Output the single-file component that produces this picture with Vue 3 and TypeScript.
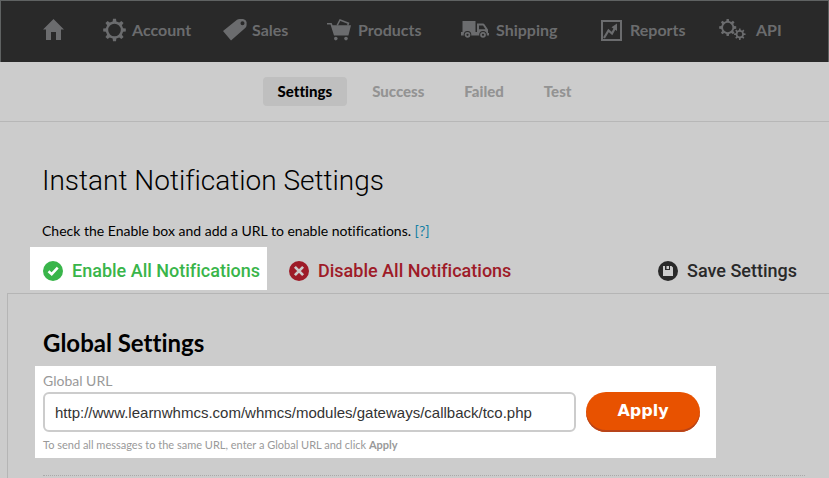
<script setup lang="ts">
import { ref } from 'vue'

type IconName = 'home' | 'gear' | 'tag' | 'cart' | 'truck' | 'chart' | 'gears'

interface NavItem {
  label: string
  icon: IconName
  width: number
}

const navItems: NavItem[] = [
  { label: '', icon: 'home', width: 22 },
  { label: 'Account', icon: 'gear', width: 24 },
  { label: 'Sales', icon: 'tag', width: 24 },
  { label: 'Products', icon: 'cart', width: 26 },
  { label: 'Shipping', icon: 'truck', width: 30 },
  { label: 'Reports', icon: 'chart', width: 24 },
  { label: 'API', icon: 'gears', width: 32 },
]

const tabs = ['Settings', 'Success', 'Failed', 'Test']
const activeTab = ref('Settings')
const globalUrl = ref('http://www.learnwhmcs.com/whmcs/modules/gateways/callback/tco.php')

function gearPath(cx: number, cy: number, outer: number, body: number, hole: number, teeth = 8): string {
  const step = (Math.PI * 2) / teeth
  const points: string[] = []
  const at = (radius: number, angle: number) =>
    `${(cx + radius * Math.cos(angle)).toFixed(2)} ${(cy + radius * Math.sin(angle)).toFixed(2)}`
  for (let i = 0; i < teeth; i++) {
    const a = i * step - Math.PI / 2
    points.push(at(body, a - step * 0.27), at(outer, a - step * 0.17), at(outer, a + step * 0.17), at(body, a + step * 0.27))
  }
  return (
    `M${points.join('L')}Z` +
    `M${cx - hole} ${cy}a${hole} ${hole} 0 1 0 ${hole * 2} 0a${hole} ${hole} 0 1 0 ${-hole * 2} 0Z`
  )
}

const gear = gearPath(11.5, 12, 11.4, 8.8, 6.3)
const bigGear = gearPath(8.7, 9.5, 8.6, 6.6, 4.7)
const smallGear = gearPath(20.8, 16.2, 5.8, 4.2, 2.4)
</script>

<template>
  <div class="page">
    <header class="topbar">
      <nav class="nav" aria-label="Main">
        <a v-for="item in navItems" :key="item.icon" href="#" class="nav-link" :aria-label="item.label || 'Home'">
          <svg :width="item.width" height="24" :viewBox="`0 0 ${item.width} 24`" fill="currentColor" fill-rule="evenodd" aria-hidden="true">
            <path v-if="item.icon === 'home'" d="M10.5 1L0 11.5H3V22H8V14H13V22H18V11.5H21Z" />
            <path v-else-if="item.icon === 'gear'" :d="gear" />
            <path v-else-if="item.icon === 'tag'" d="M0 13L14 1.7Q15 1 16.5 1H20Q23 1.3 23.6 4V7Q23.6 8.5 22.5 9.7L8 22.6ZM19.5 3.2a2 2 0 1 0 0 4a2 2 0 1 0 0-4Z" />
            <template v-else-if="item.icon === 'cart'">
              <path d="M0 5H4.6L5.6 7.2H24L21.4 17.5H7L3.5 6.6H0Z" />
              <path d="M10.2 7.3L13 2L21.5 5.3L20.7 7.4" fill="none" stroke="currentColor" stroke-width="1.5" />
              <circle cx="8.8" cy="20.6" r="1.8" />
              <circle cx="19" cy="20.6" r="1.8" />
            </template>
            <template v-else-if="item.icon === 'truck'">
              <path d="M1.5 3H14.5V14H16V5.5H22Q23 5.5 23.6 6.5L27 11.5V15H28V17.5H0V14H1.5ZM18 7.5V11.3H24.5L22 7.5Z" />
              <circle cx="6.5" cy="16.8" r="3.8" class="tyre" />
              <circle cx="22" cy="16.8" r="3.8" class="tyre" />
              <circle cx="6.5" cy="16.8" r="2" fill="none" stroke="currentColor" stroke-width="1.8" />
              <circle cx="22" cy="16.8" r="2" fill="none" stroke="currentColor" stroke-width="1.8" />
            </template>
            <template v-else-if="item.icon === 'chart'">
              <path d="M0 2H21V23H0ZM2 4V21H19V4Z" />
              <path d="M3 20L7.5 12.5L11 15.5L14 10" fill="none" stroke="currentColor" stroke-width="2.2" />
              <path d="M16 5.5V13L10.5 9.2Z" />
            </template>
            <path v-else :d="bigGear + smallGear" />
          </svg>
          <span v-if="item.label">{{ item.label }}</span>
        </a>
      </nav>
    </header>

    <nav class="tabs" aria-label="Notifications">
      <button
        v-for="tab in tabs"
        :key="tab"
        type="button"
        class="tab"
        :class="{ active: tab === activeTab }"
        @click="activeTab = tab"
      >{{ tab }}</button>
    </nav>

    <main>
      <section class="intro">
        <h1>Instant Notification Settings</h1>
        <p>Check the Enable box and add a URL to enable notifications. <a href="#">[?]</a></p>
      </section>

      <div class="actions">
        <button type="button" class="action enable">
          <svg width="20" height="20" viewBox="0 0 20 20" aria-hidden="true">
            <circle cx="10" cy="10" r="10" fill="currentColor" />
            <path d="M5.5 10.2L8.7 13.2L14.7 6.6" fill="none" stroke="#fff" stroke-width="2.6" />
          </svg>
          Enable All Notifications
        </button>
        <button type="button" class="action disable">
          <svg width="20" height="20" viewBox="0 0 20 20" aria-hidden="true">
            <circle cx="10" cy="10" r="10" fill="currentColor" />
            <path d="M5.9 5.9L14.1 14.1M14.1 5.9L5.9 14.1" fill="none" stroke="#ccc" stroke-width="2.7" />
          </svg>
          Disable All Notifications
        </button>
        <button type="button" class="action save">
          <svg width="20" height="20" viewBox="0 0 20 20" aria-hidden="true">
            <circle cx="10" cy="10" r="10" fill="currentColor" />
            <path d="M5 5H7V9H12V5H13.5L15 6.5V15H5ZM8.5 5H11V8H8.5Z" fill="#ccc" />
          </svg>
          Save Settings
        </button>
      </div>

      <section class="panel">
        <h2>Global Settings</h2>
        <form class="global-form" @submit.prevent>
          <label for="global-url">Global URL</label>
          <div class="field-row">
            <input id="global-url" v-model="globalUrl" type="text" spellcheck="false" />
            <button type="submit" class="apply">Apply</button>
          </div>
          <p class="hint">To send all messages to the same URL, enter a Global URL and click <strong>Apply</strong></p>
        </form>
        <hr />
      </section>
    </main>
  </div>
</template>

<style>
body {
  margin: 0;
  background: #ccc;
}
</style>

<style scoped>
.page {
  box-sizing: border-box;
  min-height: 100vh;
  overflow: hidden;
  background: #ccc;
  color: #000;
  font-family: Lato, "Open Sans", sans-serif;
  font-variant-ligatures: none;
}

button {
  border: 0;
  margin: 0;
  font-variant-ligatures: none;
  cursor: pointer;
}

.topbar {
  box-sizing: border-box;
  height: 62px;
  background: #292929;
  border: 1px solid #5f6262;
  border-bottom: 0;
}

.nav {
  display: grid;
  grid-template-columns: 60fr 120fr 104fr 134fr 140fr 118fr 109fr;
  padding-left: 42px;
}

.nav-link {
  display: flex;
  align-items: center;
  gap: 5px;
  height: 57px;
  color: #6b6c6e;
  font-size: 16px;
  font-weight: 700;
  line-height: 20px;
  text-decoration: none;
}

.nav-link svg {
  flex: none;
}

.tyre {
  fill: #292929;
}

.tabs {
  display: flex;
  justify-content: center;
  gap: 10px;
  padding: 15px 0 15px 20px;
  border-bottom: 1px solid #b7b7b7;
}

.tab {
  padding: 0 15px;
  border-radius: 4px;
  background: none;
  color: #939393;
  font-family: Lato, "Open Sans", sans-serif;
  font-size: 15px;
  font-weight: 900;
  line-height: 29px;
}

.tab.active {
  background: #bfbfbf;
  color: #000;
}

.intro {
  padding: 41px 42px 0;
}

h1 {
  margin: 0;
  font-family: Roboto, sans-serif;
  font-size: 28px;
  font-weight: 300;
  line-height: 36px;
}

.intro p {
  margin: 22px 0 0;
  font-size: 14px;
  line-height: 20px;
}

.intro a {
  color: #1580a4;
  text-decoration: none;
}

.actions {
  display: flex;
  align-items: center;
  padding: 6px 32px 3px 30px;
}

.action {
  display: flex;
  align-items: center;
  gap: 9px;
  height: 43px;
  padding: 4px 0 0;
  background: none;
  font-family: Roboto, Arial, sans-serif;
  font-size: 18px;
  font-weight: 500;
}

.enable {
  padding: 4px 7px 0 13px;
  background: #fff;
  color: #39b54a;
}

.disable {
  margin-left: 22px;
  color: #9e1b28;
}

.save {
  margin-left: auto;
  color: #292929;
}

.panel {
  margin-left: 7px;
  padding: 35px 24px 20px 27px;
  border: 1px solid #b5b5b5;
  border-width: 1px 0 0 1px;
}

h2 {
  margin: 0 8px;
  font-size: 24px;
  font-weight: 700;
  line-height: 28px;
}

.global-form {
  box-sizing: border-box;
  max-width: 681px;
  margin-top: 9px;
  padding: 7px 16px 6px 8px;
  background: #fff;
}

.global-form label {
  display: block;
  color: #999;
  font-size: 14px;
  line-height: 16px;
}

.field-row {
  display: flex;
  gap: 10px;
  margin-top: 3px;
}

.field-row input {
  box-sizing: border-box;
  flex: 1;
  min-width: 0;
  height: 40px;
  padding: 0 10px;
  border: 2px solid #ccc;
  border-radius: 6px;
  background: #fff;
  color: #333;
  font-family: "Liberation Sans", Arial, sans-serif;
  font-size: 15px;
}

.apply {
  width: 114px;
  height: 40px;
  padding: 0 0 3px;
  border-radius: 20px;
  background: #e85200;
  box-shadow: inset 0 -2px #b8441a;
  color: #fff;
  font-family: "DejaVu Sans", sans-serif;
  font-size: 16px;
  font-weight: 700;
}

.hint {
  margin: 5px 0 0;
  color: #999;
  font-size: 11px;
  line-height: 15px;
}

hr {
  margin: 17px 0 0 8px;
  border: 0;
  border-top: 1px dotted #aaa;
}
</style>
